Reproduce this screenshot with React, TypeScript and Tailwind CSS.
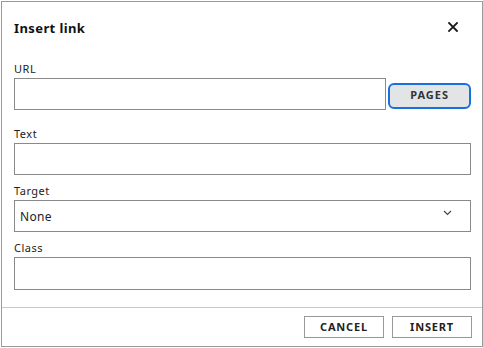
import React from "react";

const font = { fontFamily: '"Noto Sans", "Open Sans", sans-serif' };

function Label({ children, className = "" }: { children: React.ReactNode; className?: string }) {
  return (
    <div className={`h-[14px] text-[11px] leading-[14px] tracking-[0.5px] text-[#222] ${className}`}>{children}</div>
  );
}

export default function App() {
  return (
    <div className="w-[483px] h-[348px] bg-white pt-[1px] pl-[1px]" style={font}>
      <div className="w-[482px] h-[346px] border border-[#9a9a9a] bg-white flex flex-col">
        <div className="h-[52px] flex items-center justify-between pl-[12px] pr-[24px] shrink-0">
          <div className="text-[13px] font-bold tracking-[0.4px] text-[#111] pt-[1px]">Insert link</div>
          <svg width="10" height="10" viewBox="0 0 10 10" className="mb-[3px]">
            <path d="M1 1 L9 9 M9 1 L1 9" stroke="#1a1a1a" strokeWidth="1.8" strokeLinecap="square" />
          </svg>
        </div>
        <div className="flex-1 pl-[12px] pr-[11px] pt-[8px]">
          <Label className="mb-[2px]">URL</Label>
          <div className="flex items-center gap-[2px]">
            <div className="w-[373px] h-[32px] border border-[#8a8a8a] bg-white" />
            <div className="w-[83px] h-[26px] mt-[3px] border-2 border-[#1670e0] rounded-[6px] bg-[#e3e4e6] flex items-center justify-center text-[11px] font-bold tracking-[1px] text-[#333]">
              PAGES
            </div>
          </div>
          <Label className="mt-[17px] mb-[2px]">Text</Label>
          <div className="w-full h-[32px] border border-[#8a8a8a] bg-white" />
          <Label className="mt-[9px] mb-[2px]">Target</Label>
          <div className="w-full h-[32px] border border-[#8a8a8a] bg-white flex items-center justify-between pl-[5px] pr-[18px]">
            <span className="text-[12px] text-[#222] tracking-[0.3px] mt-[1px]">None</span>
            <svg width="9" height="6" viewBox="0 0 9 6" className="mb-[6px]">
              <path d="M1 1 L4.5 4.5 L8 1" stroke="#444" strokeWidth="1.2" fill="none" />
            </svg>
          </div>
          <Label className="mt-[9px] mb-[2px]">Class</Label>
          <div className="w-full h-[33px] border border-[#8a8a8a] bg-white" />
        </div>
        <div className="h-[39px] shrink-0 border-t border-[#c8c8c8] flex justify-end items-start gap-[8px] pt-[8px] pr-[10px]">
          <div className="w-[80px] h-[22px] border border-[#999] flex items-center justify-center text-[11px] font-bold tracking-[0.8px] text-[#222]">
            CANCEL
          </div>
          <div className="w-[80px] h-[22px] border border-[#999] flex items-center justify-center text-[11px] font-bold tracking-[0.8px] text-[#222]">
            INSERT
          </div>
        </div>
      </div>
    </div>
  );
}
